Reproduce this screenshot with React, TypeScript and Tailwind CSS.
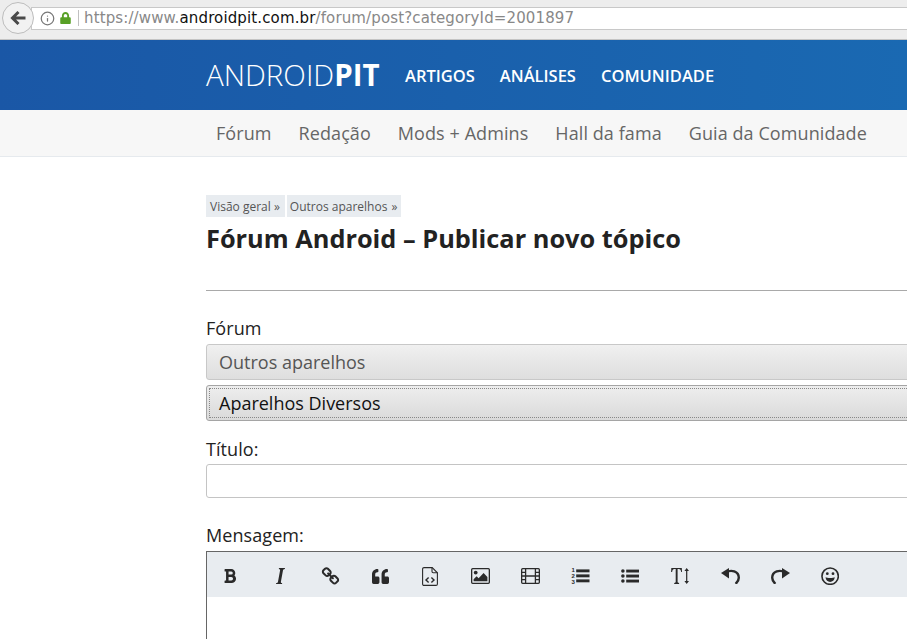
import { FaBold, FaQuoteLeft, FaLock } from "react-icons/fa";
import { FiInfo } from "react-icons/fi";

const BackArrow = () => (
  <svg viewBox="0 0 16 14" className="w-[16px] h-[14px]" fill="none" stroke="currentColor" strokeWidth="3">
    <path d="M2.5 7H15.5M8.5 1 2.5 7l6 6" />
  </svg>
);
const Italic = () => (
  <svg viewBox="0 0 9 16" className="w-[9px] h-[16px]" fill="currentColor">
    <path d="M3 0h6l-.2 1c-1.2.2-1.6.4-1.8 1.3L4.9 13.7c-.2.9.2 1.1 1.3 1.3L6 16H0l.2-1c1.2-.2 1.6-.4 1.8-1.3L4.1 2.3C4.3 1.4 3.9 1.2 2.8 1z" />
  </svg>
);
const LinkIcon = () => (
  <svg viewBox="0 0 1792 1792" className="w-[19px] h-[19px] shrink-0" fill="currentColor">
    <path d="M1520 1216q0-40-28-68l-208-208q-28-28-68-28-42 0-72 32 3 3 19 18.5t21.5 21.5 15 19 13 25.5 3.5 27.5q0 40-28 68t-68 28q-15 0-27.5-3.5t-25.5-13-19-15-21.5-21.5-18.5-19q-33 31-33 73 0 40 28 68l206 207q27 27 68 27 40 0 68-26l147-146q28-28 28-67zm-703-705q0-40-28-68l-206-207q-28-28-68-28-39 0-68 27l-147 146q-28 28-28 67 0 40 28 68l208 208q27 27 68 27 42 0 72-31-3-3-19-18.5t-21.5-21.5-15-19-13-25.5-3.5-27.5q0-40 28-68t68-28q15 0 27.5 3.5t25.5 13 19 15 21.5 21.5 18.5 19q33-31 33-73zm895 705q0 120-85 203l-147 146q-83 83-203 83-121 0-204-85l-206-207q-83-83-83-203 0-123 88-209l-88-88q-86 88-208 88-120 0-204-84l-208-208q-84-84-84-204t85-203l147-146q83-83 203-83 121 0 204 85l206 207q83 83 83 203 0 123-88 209l88 88q86-88 208-88 120 0 204 84l208 208q84 84 84 204z" />
  </svg>
);
const FileCode = () => (
  <svg viewBox="0 0 16 19" className="w-[16px] h-[19px]" fill="none" stroke="currentColor">
    <path strokeWidth="1.1" d="M2 .6h8.2l5.2 5.2V17a1.4 1.4 0 0 1-1.4 1.4H2A1.4 1.4 0 0 1 .6 17V2A1.4 1.4 0 0 1 2 .6z" />
    <path strokeWidth="1.1" d="M10 .6v4a1.2 1.2 0 0 0 1.2 1.2h4.2" />
    <path strokeWidth="1.4" d="M6.6 10.5 4 13l2.6 2.5M9.4 10.5 12 13l-2.6 2.5" />
  </svg>
);
const ImageIcon = () => (
  <svg viewBox="0 0 19 16" className="w-[19px] h-[16px]" fill="currentColor">
    <rect x=".65" y=".65" width="17.7" height="14.7" rx="1" fill="none" stroke="currentColor" strokeWidth="1.3" />
    <circle cx="4.7" cy="4.6" r="1.9" />
    <path d="M2.6 13.3v-2l3-3 2 2 5-5.2 3.8 3.8v4.4z" />
  </svg>
);
const Film = () => (
  <svg viewBox="0 0 19 16" className="w-[19px] h-[16px]" fill="none" stroke="currentColor" strokeWidth="1.3">
    <rect x=".65" y=".65" width="17.7" height="14.7" rx="1" />
    <path d="M4.6 .6v14.8M14.4 .6v14.8M.6 4.3h4M.6 8h4M.6 11.7h4M14.4 4.3h4M14.4 8h4M14.4 11.7h4M4.6 8h9.8" />
  </svg>
);
const ListOl = () => (
  <svg viewBox="0 0 19 18" className="w-[19px] h-[18px]" fill="currentColor">
    <rect x="5.2" y="2.4" width="13.3" height="2.9" />
    <rect x="5.2" y="7.4" width="13.3" height="2.9" />
    <rect x="5.2" y="12.4" width="13.3" height="2.9" />
    <text x="0.6" y="5.2" fontSize="6" fontWeight="700" fontFamily="Liberation Sans">1</text>
    <text x="0.6" y="11" fontSize="6" fontWeight="700" fontFamily="Liberation Sans">2</text>
    <text x="0.6" y="17" fontSize="6" fontWeight="700" fontFamily="Liberation Sans">3</text>
  </svg>
);
const ListUl = () => (
  <svg viewBox="0 0 18.5 14" className="w-[18.5px] h-[14px]" fill="currentColor">
    <circle cx="1.9" cy="2" r="1.8" />
    <circle cx="1.9" cy="7" r="1.8" />
    <circle cx="1.9" cy="12" r="1.8" />
    <rect x="5.2" y=".6" width="13.3" height="2.9" />
    <rect x="5.2" y="5.6" width="13.3" height="2.9" />
    <rect x="5.2" y="10.6" width="13.3" height="2.9" />
  </svg>
);
const TextHeight = () => (
  <svg viewBox="0 0 19 16" className="w-[19px] h-[16px]" fill="currentColor">
    <path d="M.3 0h10.5l.2 4h-.8c-.3-1.8-.8-3-2.5-3H6.6v12.8c0 .8.4 1 1.5 1.2v1H3.2v-1c1.1-.2 1.5-.4 1.5-1.2V1H3.6C1.9 1 1.4 2.2 1.1 4H.1z" />
    <path d="M13.4 3 15.7 0 18 3zM13.4 13l2.3 3 2.3-3z" />
    <rect x="15.1" y="2" width="1.2" height="12" />
  </svg>
);
const Undo = ({ flip }: { flip?: boolean }) => (
  <svg viewBox="0 0 19 16" className={flip ? "w-[19px] h-[16px] -scale-x-100" : "w-[19px] h-[16px]"} fill="currentColor">
    <path d="M5 4.4C10 1.4 17.8 3 17.8 9.8c0 2.4-1.4 4.4-3.2 6" fill="none" stroke="currentColor" strokeWidth="2.4" />
    <path d="M0 5 8 0v10.5z" />
  </svg>
);
const Smile = () => (
  <svg viewBox="0 0 18.3 18.3" className="w-[18.3px] h-[18.3px]" fill="currentColor">
    <circle cx="9.15" cy="9.15" r="8.2" fill="none" stroke="currentColor" strokeWidth="1.6" />
    <circle cx="6.3" cy="6.7" r="1.4" />
    <circle cx="12" cy="6.7" r="1.4" />
    <path d="M4.5 10.3c1.5 1 7.8 1 9.3 0-.3 3-2.3 4.6-4.65 4.6S4.8 13.3 4.5 10.3z" />
  </svg>
);

const tools = [
  <FaBold className="w-[12px] h-[16px]" />,
  <Italic />,
  <LinkIcon />,
  <FaQuoteLeft className="w-[17px] h-[17px]" />,
  <FileCode />,
  <ImageIcon />,
  <Film />,
  <ListOl />,
  <ListUl />,
  <TextHeight />,
  <Undo />,
  <Undo flip />,
  <Smile />,
];

export default function App() {
  return (
    <div className="w-[907px] h-[639px] overflow-hidden bg-white font-['Open_Sans',sans-serif] text-[#222]">
      <div className="h-[40px] bg-[#ededed] border-b border-[#c4c4c4] flex items-center pl-[2px] pb-[3px]">
        <div className="w-[32px] h-[32px] rounded-full border border-[#bdbdbd] bg-[#f2f2f2] flex items-center justify-center text-[#4a4a4a] shrink-0 z-10 -mr-[3px]">
          <BackArrow />
        </div>
        <div className="flex-1 h-[23px] bg-white border border-[#c8c8c8] border-r-0 flex items-center pl-[8px] font-['DejaVu_Sans',sans-serif] text-[15px] tracking-[0.13px] whitespace-nowrap">
          <FiInfo className="w-[15px] h-[15px] text-[#777] shrink-0" />
          <FaLock className="w-[11px] h-[12px] text-[#58a026] ml-[5px] shrink-0" />
          <div className="w-px h-[16px] bg-[#c0c0c0] ml-[7px] mr-[5px]" />
          <span className="text-[#888]">https://www.</span>
          <span className="text-[#111]">androidpit.com.br</span>
          <span className="text-[#888]">/forum/post?categoryId=2001897</span>
        </div>
      </div>

      <div className="h-[70px] bg-gradient-to-r from-[#1a57a6] to-[#1a69b2] flex items-center pl-[206px] text-white">
        <div className="text-[29.5px] leading-none whitespace-nowrap w-[173px] mr-[26px]">
          <span className="font-light">ANDROID</span><span className="font-bold">PIT</span>
        </div>
        <nav className="flex gap-[25px] pt-[2px] text-[16.5px] font-semibold whitespace-nowrap">
          <span>ARTIGOS</span>
          <span>ANÁLISES</span>
          <span>COMUNIDADE</span>
        </nav>
      </div>

      <div className="h-[47px] bg-[#f7f7f7] border-b border-[#e6eaee] flex items-center pl-[216px] gap-[27px] text-[18px] tracking-[0.08px] text-[#666] whitespace-nowrap">
        <span>Fórum</span>
        <span>Redação</span>
        <span>Mods + Admins</span>
        <span>Hall da fama</span>
        <span>Guia da Comunidade</span>
      </div>

      <main className="ml-[206px] w-[760px] pt-[38px]">
        <div className="flex gap-[2px] text-[12px] text-[#555] h-[22px] leading-[24px] whitespace-nowrap">
          <span className="bg-[#e8ecf0] pl-[4px] pr-[5px]">Visão geral »</span>
          <span className="bg-[#e8ecf0] pl-[3px] pr-[4px]">Outros aparelhos <span className="ml-[1px]">»</span></span>
        </div>
        <h1 className="mt-[5px] text-[25.35px] leading-[32px] font-bold text-[#222] whitespace-nowrap">Fórum Android – Publicar novo tópico</h1>
        <hr className="mt-[36px] border-t border-[#a9a9a9]" />

        <div className="mt-[25px] text-[18px] leading-[24px] tracking-[0.08px]">Fórum</div>
        <div className="mt-[4px] h-[36px] rounded-[3px] border border-[#c8c8c8] bg-gradient-to-b from-[#f0f0f0] to-[#dedede] flex items-center pl-[12px] text-[18px] text-[#555]">Outros aparelhos</div>
        <div className="mt-[5px] h-[36px] rounded-[3px] border border-[#a5a5a5] bg-gradient-to-b from-[#eeeeee] to-[#dadada] p-[2px]">
          <div className="h-full border border-dotted border-[#888] flex items-center pl-[9px] text-[18px] text-[#111]">Aparelhos Diversos</div>
        </div>

        <div className="mt-[16px] text-[18px] leading-[24px] tracking-[0.08px]">Título:</div>
        <div className="mt-[3px] h-[34px] rounded-[3px] border border-[#c4c4c4] bg-white" />

        <div className="mt-[25px] text-[18px] leading-[24px] tracking-[0.08px]">Mensagem:</div>
        <div className="mt-[4px] border-t border-l border-[#666] h-[100px]">
          <div className="h-[45px] bg-[#e8ecf0] flex items-center gap-[30px] pl-[13px] pt-[3px] text-[#2a2a2a]">
            {tools.map((t, i) => (
              <span key={i} className="w-[20px] shrink-0 flex items-center justify-center">{t}</span>
            ))}
          </div>
        </div>
      </main>
    </div>
  );
}
